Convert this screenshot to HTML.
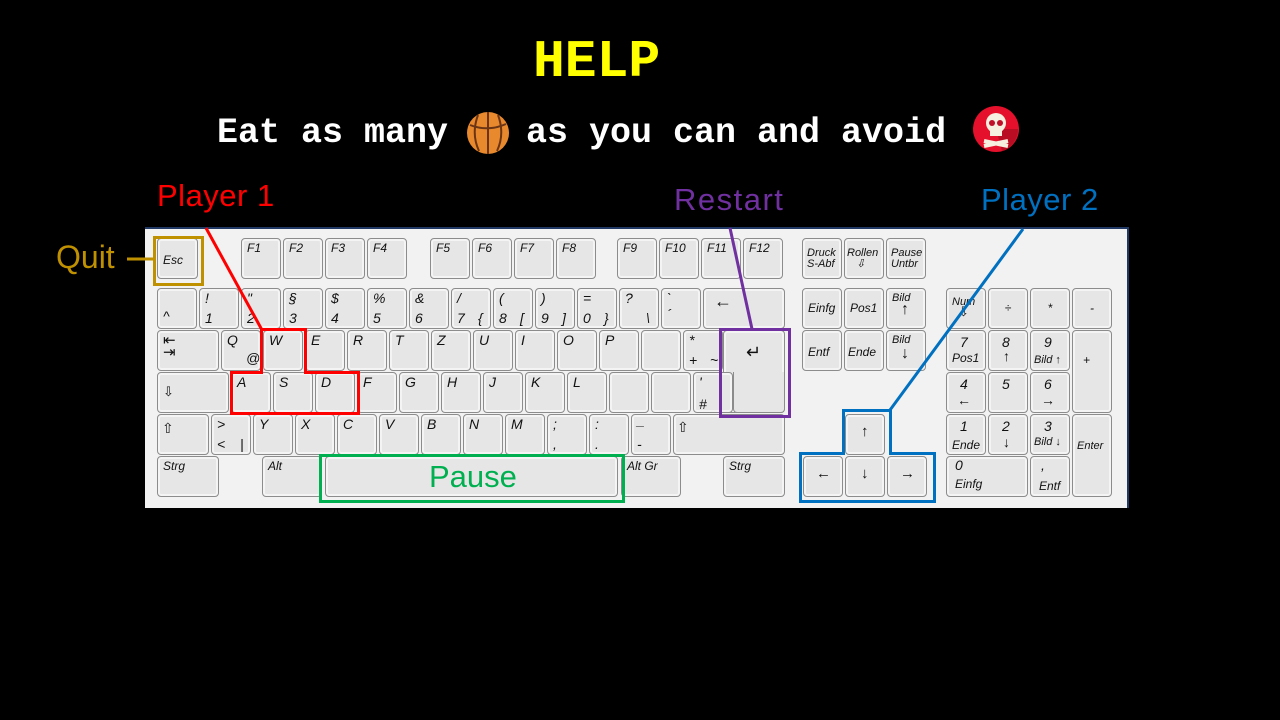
<!DOCTYPE html>
<html><head><meta charset="utf-8"><style>
*{margin:0;padding:0;box-sizing:border-box}
body{width:1280px;height:720px;background:#000;position:relative;overflow:hidden;font-family:"Liberation Sans",sans-serif}
.t{position:absolute;white-space:nowrap}
#kb{position:absolute;left:145px;top:227px;width:984px;height:281px;background:#f2f2f2;border-top:2px solid #1f3864;border-right:2px solid #1f3864}
.k{position:absolute;height:41px;width:40px;background:#e6e6e6;border:1px solid #8c8c8c;border-radius:4px;box-shadow:inset 0 0 0 2px #f4f4f4;font-style:italic;font-size:12px;color:#111;padding:2px 5px;line-height:14px}
.k b{font-weight:normal;position:absolute;font-size:14px}
.ann{position:absolute;font-size:31px;white-space:nowrap}
</style></head><body>
<div class="t" style="left:533px;top:32px;font:bold 53px 'Liberation Mono',monospace;color:#ff0;letter-spacing:0px">HELP</div>
<div class="t" style="left:217px;top:113px;font:35px 'Liberation Mono',monospace;color:#fff;font-weight:bold;letter-spacing:0px">Eat as many</div>
<div class="t" style="left:526px;top:113px;font:35px 'Liberation Mono',monospace;color:#fff;font-weight:bold">as you can and avoid</div>
<svg style="position:absolute;left:465px;top:110px" width="48" height="48" viewBox="0 0 48 48">
<circle cx="23" cy="23" r="21" fill="#e8892e"/>
<g fill="none" stroke="#6b3414" stroke-width="2"><path d="M5 15 Q23 22 41 14"/><path d="M23 2 V44"/><path d="M13 5 Q6 24 14 41"/><path d="M33 5 Q40 24 32 41"/></g></svg>
<svg style="position:absolute;left:972px;top:106px" width="48" height="48" viewBox="0 0 48 48">
<circle cx="24" cy="23" r="23" fill="#e5102b"/>
<path d="M24 23 L46 23 A23 23 0 0 1 30 45 Z" fill="#b80d22"/>
<ellipse cx="24" cy="17" rx="10" ry="10" fill="#f5f0e0"/><rect x="18" y="22" width="12" height="8" fill="#f5f0e0"/>
<circle cx="20" cy="17" r="3" fill="#c0102a"/><circle cx="28" cy="17" r="3" fill="#c0102a"/>
<path d="M12 35 L36 40 M12 40 L36 35" stroke="#f5f0e0" stroke-width="4"/></svg>

<div id="kb"></div>
<div class="k" style="left:157px;top:238px;width:41px;padding-top:14px">Esc</div>
<div class="k" style="left:241px;top:238px">F1</div><div class="k" style="left:283px;top:238px">F2</div><div class="k" style="left:325px;top:238px">F3</div><div class="k" style="left:367px;top:238px">F4</div>
<div class="k" style="left:430px;top:238px">F5</div><div class="k" style="left:472px;top:238px">F6</div><div class="k" style="left:514px;top:238px">F7</div><div class="k" style="left:556px;top:238px">F8</div>
<div class="k" style="left:617px;top:238px">F9</div><div class="k" style="left:659px;top:238px">F10</div><div class="k" style="left:701px;top:238px">F11</div><div class="k" style="left:743px;top:238px">F12</div>
<div class="k" style="left:802px;top:238px;font-size:11px;line-height:11px;padding:9px 4px">Druck<br>S-Abf</div>
<div class="k" style="left:844px;top:238px;font-size:11px;line-height:11px;padding:9px 2px">Rollen<br>&nbsp;&nbsp;&nbsp;⇩</div>
<div class="k" style="left:886px;top:238px;font-size:11px;line-height:11px;padding:9px 4px">Pause<br>Untbr</div>
<div class="k" style="left:157px;top:288px"><b style="left:5px;top:20px">^</b></div>
<div class="k" style="left:199px;top:288px"><b style="left:5px;top:2px">!</b><b style="left:5px;top:22px">1</b></div>
<div class="k" style="left:241px;top:288px"><b style="left:5px;top:2px">"</b><b style="left:5px;top:22px">2</b></div>
<div class="k" style="left:283px;top:288px"><b style="left:5px;top:2px">§</b><b style="left:5px;top:22px">3</b></div>
<div class="k" style="left:325px;top:288px"><b style="left:5px;top:2px">$</b><b style="left:5px;top:22px">4</b></div>
<div class="k" style="left:367px;top:288px"><b style="left:5px;top:2px">%</b><b style="left:5px;top:22px">5</b></div>
<div class="k" style="left:409px;top:288px"><b style="left:5px;top:2px">&amp;</b><b style="left:5px;top:22px">6</b></div>
<div class="k" style="left:451px;top:288px"><b style="left:5px;top:2px">/</b><b style="left:5px;top:22px">7</b><b style="left:26px;top:22px">{</b></div>
<div class="k" style="left:493px;top:288px"><b style="left:5px;top:2px">(</b><b style="left:5px;top:22px">8</b><b style="left:26px;top:22px">[</b></div>
<div class="k" style="left:535px;top:288px"><b style="left:5px;top:2px">)</b><b style="left:5px;top:22px">9</b><b style="left:26px;top:22px">]</b></div>
<div class="k" style="left:577px;top:288px"><b style="left:5px;top:2px">=</b><b style="left:5px;top:22px">0</b><b style="left:26px;top:22px">}</b></div>
<div class="k" style="left:619px;top:288px"><b style="left:5px;top:2px">?</b><b style="left:26px;top:22px">\</b></div>
<div class="k" style="left:661px;top:288px"><b style="left:5px;top:2px">`</b><b style="left:5px;top:18px">´</b></div>
<div class="k" style="left:703px;top:288px;width:82px"><b style="left:10px;top:5px;font-style:normal;font-size:18px">←</b></div>
<div class="k" style="left:802px;top:288px;padding-top:12px">Einfg</div>
<div class="k" style="left:844px;top:288px;padding-top:12px">Pos1</div>
<div class="k" style="left:886px;top:288px;font-size:11px">Bild<b style="left:14px;top:14px;font-style:normal;font-size:16px">↑</b></div>
<div class="k" style="left:946px;top:288px;font-size:11px;padding-top:6px">Num<b style="left:11px;top:16px;font-style:normal;font-size:13px">⇩</b></div>
<div class="k" style="left:988px;top:288px;text-align:center;padding-top:12px">÷</div>
<div class="k" style="left:1030px;top:288px;text-align:center;padding-top:12px">*</div>
<div class="k" style="left:1072px;top:288px;text-align:center;padding-top:12px">-</div>
<div class="k" style="left:157px;top:330px;width:62px"><b style="left:5px;top:3px;font-style:normal;font-size:15px">⇤</b><b style="left:5px;top:15px;font-style:normal;font-size:15px">⇥</b></div>
<div class="k" style="left:221px;top:330px"><b style="left:5px;top:2px">Q</b><b style="left:24px;top:20px">@</b></div>
<div class="k" style="left:263px;top:330px"><b style="left:5px;top:2px">W</b></div>
<div class="k" style="left:305px;top:330px"><b style="left:5px;top:2px">E</b></div>
<div class="k" style="left:347px;top:330px"><b style="left:5px;top:2px">R</b></div>
<div class="k" style="left:389px;top:330px"><b style="left:5px;top:2px">T</b></div>
<div class="k" style="left:431px;top:330px"><b style="left:5px;top:2px">Z</b></div>
<div class="k" style="left:473px;top:330px"><b style="left:5px;top:2px">U</b></div>
<div class="k" style="left:515px;top:330px"><b style="left:5px;top:2px">I</b></div>
<div class="k" style="left:557px;top:330px"><b style="left:5px;top:2px">O</b></div>
<div class="k" style="left:599px;top:330px"><b style="left:5px;top:2px">P</b></div>
<div class="k" style="left:641px;top:330px"></div>
<div class="k" style="left:683px;top:330px"><b style="left:5px;top:2px">*</b><b style="left:5px;top:22px">+</b><b style="left:26px;top:22px">~</b></div>
<div class="k" style="left:723px;top:330px;width:62px;height:83px"><b style="left:22px;top:14px;font-style:normal;font-size:18px">↵</b></div>
<div class="k" style="left:802px;top:330px;padding-top:14px">Entf</div>
<div class="k" style="left:844px;top:330px;padding-top:14px;padding-left:3px">Ende</div>
<div class="k" style="left:886px;top:330px;font-size:11px">Bild<b style="left:14px;top:16px;font-style:normal;font-size:16px">↓</b></div>
<div class="k" style="left:946px;top:330px"><b style="left:13px;top:4px">7</b><b style="left:5px;top:20px;font-size:12px">Pos1</b></div>
<div class="k" style="left:988px;top:330px"><b style="left:13px;top:4px">8</b><b style="left:14px;top:18px;font-style:normal">↑</b></div>
<div class="k" style="left:1030px;top:330px"><b style="left:13px;top:4px">9</b><b style="left:3px;top:22px;font-size:11px">Bild ↑</b></div>
<div class="k" style="left:1072px;top:330px;height:83px;padding-top:22px;padding-left:10px">+</div>
<div class="k" style="left:157px;top:372px;width:72px"><b style="left:5px;top:12px;font-style:normal;font-size:13px">⇩</b></div>
<div class="k" style="left:231px;top:372px"><b style="left:5px;top:2px">A</b></div>
<div class="k" style="left:273px;top:372px"><b style="left:5px;top:2px">S</b></div>
<div class="k" style="left:315px;top:372px"><b style="left:5px;top:2px">D</b></div>
<div class="k" style="left:357px;top:372px"><b style="left:5px;top:2px">F</b></div>
<div class="k" style="left:399px;top:372px"><b style="left:5px;top:2px">G</b></div>
<div class="k" style="left:441px;top:372px"><b style="left:5px;top:2px">H</b></div>
<div class="k" style="left:483px;top:372px"><b style="left:5px;top:2px">J</b></div>
<div class="k" style="left:525px;top:372px"><b style="left:5px;top:2px">K</b></div>
<div class="k" style="left:567px;top:372px"><b style="left:5px;top:2px">L</b></div>
<div class="k" style="left:609px;top:372px"></div>
<div class="k" style="left:651px;top:372px"></div>
<div class="k" style="left:693px;top:372px"><b style="left:5px;top:2px">'</b><b style="left:5px;top:24px">#</b></div>
<div class="k" style="left:733px;top:372px;width:52px;height:41px;border-top:none;border-radius:0 0 4px 4px;box-shadow:none"></div>
<div class="k" style="left:946px;top:372px"><b style="left:13px;top:4px">4</b><b style="left:10px;top:20px;font-style:normal">←</b></div>
<div class="k" style="left:988px;top:372px"><b style="left:13px;top:4px">5</b></div>
<div class="k" style="left:1030px;top:372px"><b style="left:13px;top:4px">6</b><b style="left:10px;top:20px;font-style:normal">→</b></div>
<div class="k" style="left:157px;top:414px;width:52px"><b style="left:4px;top:6px;font-style:normal;font-size:14px">⇧</b></div>
<div class="k" style="left:211px;top:414px"><b style="left:5px;top:2px">&gt;</b><b style="left:5px;top:22px">&lt;</b><b style="left:28px;top:22px">|</b></div>
<div class="k" style="left:253px;top:414px"><b style="left:5px;top:2px">Y</b></div>
<div class="k" style="left:295px;top:414px"><b style="left:5px;top:2px">X</b></div>
<div class="k" style="left:337px;top:414px"><b style="left:5px;top:2px">C</b></div>
<div class="k" style="left:379px;top:414px"><b style="left:5px;top:2px">V</b></div>
<div class="k" style="left:421px;top:414px"><b style="left:5px;top:2px">B</b></div>
<div class="k" style="left:463px;top:414px"><b style="left:5px;top:2px">N</b></div>
<div class="k" style="left:505px;top:414px"><b style="left:5px;top:2px">M</b></div>
<div class="k" style="left:547px;top:414px"><b style="left:5px;top:2px">;</b><b style="left:5px;top:22px">,</b></div>
<div class="k" style="left:589px;top:414px"><b style="left:5px;top:2px">:</b><b style="left:5px;top:22px">.</b></div>
<div class="k" style="left:631px;top:414px"><b style="left:5px;top:-2px">_</b><b style="left:5px;top:22px">-</b></div>
<div class="k" style="left:673px;top:414px;width:112px"><b style="left:3px;top:5px;font-style:normal;font-size:14px">⇧</b></div>
<div class="k" style="left:845px;top:414px"><b style="left:15px;top:10px;font-style:normal;font-size:15px">↑</b></div>
<div class="k" style="left:946px;top:414px"><b style="left:13px;top:4px">1</b><b style="left:5px;top:23px;font-size:12px">Ende</b></div>
<div class="k" style="left:988px;top:414px"><b style="left:13px;top:4px">2</b><b style="left:14px;top:20px;font-style:normal">↓</b></div>
<div class="k" style="left:1030px;top:414px"><b style="left:13px;top:4px">3</b><b style="left:3px;top:20px;font-size:11px">Bild ↓</b></div>
<div class="k" style="left:1072px;top:414px;height:83px;padding-top:24px;padding-left:4px;font-size:11px">Enter</div>
<div class="k" style="left:157px;top:456px;width:62px">Strg</div>
<div class="k" style="left:262px;top:456px;width:60px">Alt</div>
<div class="k" style="left:325px;top:456px;width:293px"></div>
<div class="k" style="left:621px;top:456px;width:60px">Alt Gr</div>
<div class="k" style="left:723px;top:456px;width:62px">Strg</div>
<div class="k" style="left:803px;top:456px"><b style="left:12px;top:10px;font-style:normal;font-size:15px">←</b></div>
<div class="k" style="left:845px;top:456px"><b style="left:15px;top:10px;font-style:normal;font-size:15px">↓</b></div>
<div class="k" style="left:887px;top:456px"><b style="left:12px;top:10px;font-style:normal;font-size:15px">→</b></div>
<div class="k" style="left:946px;top:456px;width:82px"><b style="left:8px;top:1px">0</b><b style="left:8px;top:20px;font-size:12px">Einfg</b></div>
<div class="k" style="left:1030px;top:456px"><b style="left:10px;top:1px">,</b><b style="left:8px;top:22px;font-size:12px">Entf</b></div>

<svg style="position:absolute;left:0;top:0" width="1280" height="720" fill="none" stroke-width="3">
<path d="M127 259 H153" stroke="#bf9000"/><rect x="154.5" y="237.5" width="48" height="47" stroke="#bf9000"/>
<path d="M206 228 L262 330" stroke="#f00"/>
<path d="M261.5 329.5 H305.5 V372.5 H358.5 V413.5 H231.5 V372.5 H261.5 Z" stroke="#f00"/>
<path d="M730 228 L752 329" stroke="#7030a0"/><rect x="720.5" y="329.5" width="69" height="87" stroke="#7030a0"/>
<path d="M1023 229 L890 410" stroke="#0070c0"/>
<path d="M843.5 410.5 H890.5 V453.5 H934.5 V501.5 H800.5 V453.5 H843.5 Z" stroke="#0070c0"/>
<rect x="320.5" y="455.5" width="303" height="46" stroke="#00b050"/>
</svg>
<div class="ann" style="left:56px;top:239px;color:#bf9000;font-size:32px">Quit</div>
<div class="ann" style="left:157px;top:178px;color:#f00;letter-spacing:0.5px">Player 1</div>
<div class="ann" style="left:674px;top:182px;color:#7030a0;letter-spacing:1.5px">Restart</div>
<div class="ann" style="left:981px;top:182px;color:#0070c0;letter-spacing:0.5px">Player 2</div>
<div class="ann" style="left:429px;top:459px;color:#00b050">Pause</div>
</body></html>
